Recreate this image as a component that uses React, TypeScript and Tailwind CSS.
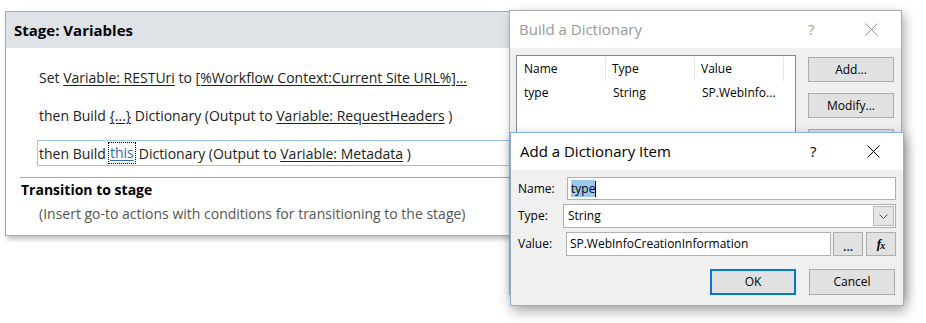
export default function App() {
  const font = { fontFamily: '"Open Sans", "Noto Sans", sans-serif' };

  function CloseIcon({ color }: { color: string }) {
    return (
      <svg width="13" height="13" viewBox="0 0 13 13">
        <path d="M0.5 0.5 L12.5 12.5 M12.5 0.5 L0.5 12.5" stroke={color} strokeWidth="1" fill="none" />
      </svg>
    );
  }

  function TitleBar({ title, active }: { title: string; active: boolean }) {
    return (
      <div className="h-[37px] bg-white flex items-center pl-[9px]">
        <div className={`text-[15px] flex-1 ${active ? "text-black" : "text-[#999]"}`}>{title}</div>
        <div className={`text-[15px] w-[14px] ${active ? "text-black" : "text-[#999]"}`}>?</div>
        <div className="ml-[43px] mr-[23px] flex items-center">
          <CloseIcon color={active ? "#000" : "#999"} />
        </div>
      </div>
    );
  }

  function Btn({ label, primary, cls }: { label: string; primary?: boolean; cls: string }) {
    return (
      <div
        className={`${cls} flex items-center justify-center bg-[#e1e1e1] text-[12px] text-black ${
          primary ? "border-2 border-[#0078d7]" : "border border-[#adadad]"
        }`}
      >
        {label}
      </div>
    );
  }

  return (
    <div className="relative w-[926px] h-[323px] bg-white overflow-hidden text-[#222]" style={font}>
      {/* workflow stage */}
      <div className="ml-[5px] mt-[11px] w-[540px] border border-[#ababab] bg-white shadow-[2px_3px_5px_rgba(0,0,0,0.25)]">
        <div className="h-[36px] bg-[#dfe3e8] flex items-center pl-[8px] font-bold text-[15px] text-black">
          Stage: Variables
        </div>
        <div className="pl-[31px] pt-[16px] flex flex-col gap-[12px] text-[14px]">
          <div className="h-[26px] flex items-center border border-transparent pl-[1px]">
            Set&nbsp;<span className="underline underline-offset-2">Variable: RESTUri</span>&nbsp;to&nbsp;
            <span className="underline underline-offset-2">[%Workflow Context:Current Site URL%]...</span>
          </div>
          <div className="h-[26px] flex items-center border border-transparent pl-[1px]">
            then Build&nbsp;<span className="underline underline-offset-2">{"{...}"}</span>&nbsp;Dictionary (Output to&nbsp;
            <span className="underline underline-offset-2">Variable: RequestHeaders</span>&nbsp;)
          </div>
          <div className="h-[26px] flex items-center border border-[#9dc3e6] pl-[1px]">
            then Build
            <span className="ml-[2px] px-[1px] border border-dotted border-black text-[#2f6db5] underline underline-offset-2 leading-[20px]">
              this
            </span>
            <span className="ml-[3px]">Dictionary (Output to&nbsp;</span>
            <span className="underline underline-offset-2">Variable: Metadata</span>&nbsp;)
          </div>
        </div>
        <div className="ml-[14px] mt-[11px] border-t border-[#a5a5a5]" />
        <div className="pl-[15px] pt-[1px] font-bold text-[14px] text-black leading-[22px]">Transition to stage</div>
        <div className="pl-[33px] pb-[8px] text-[14px] text-[#555] leading-[26px]">
          (Insert go-to actions with conditions for transitioning to the stage)
        </div>
      </div>

      {/* Build a Dictionary window */}
      <div className="absolute left-[509px] top-[10px] w-[393px] h-[285px] border border-[#aaa] bg-[#f0f0f0] shadow-[3px_4px_10px_rgba(0,0,0,0.3)]">
        <TitleBar title="Build a Dictionary" active={false} />
        <div className="flex pl-[6px] pt-[7px]">
          <div className="w-[280px] h-[220px] border border-[#828790] bg-white text-[12px] text-black">
            <div className="flex h-[26px] items-center">
              <div className="w-[89px] pl-[7px] border-r border-[#e5e5e5] h-[24px] flex items-center">Name</div>
              <div className="w-[89px] pl-[6px] border-r border-[#e5e5e5] h-[24px] flex items-center">Type</div>
              <div className="w-[89px] pl-[6px] border-r border-[#e5e5e5] h-[24px] flex items-center">Value</div>
            </div>
            <div className="flex h-[22px] items-center">
              <div className="w-[89px] pl-[7px]">type</div>
              <div className="w-[89px] pl-[7px]">String</div>
              <div className="w-[89px] pl-[7px]">SP.WebInfo...</div>
            </div>
          </div>
          <div className="ml-[12px] pt-[2px] flex flex-col gap-[11px]">
            <Btn label="Add..." cls="w-[86px] h-[25px]" />
            <Btn label="Modify..." cls="w-[86px] h-[25px]" />
            <Btn label="Remove" cls="w-[86px] h-[25px]" />
          </div>
        </div>
      </div>

      {/* Add a Dictionary Item window */}
      <div className="absolute left-[510px] top-[132px] w-[394px] h-[174px] border border-[#8ab4dc] bg-[#f0f0f0] shadow-[2px_5px_12px_rgba(0,0,0,0.35)] text-[12px] text-black">
        <TitleBar title="Add a Dictionary Item" active={true} />
        <div className="px-[7px] pt-[7px] flex flex-col">
          <div className="flex items-center h-[23px]">
            <div className="w-[49px]">Name:</div>
            <div className="w-[329px] h-[23px] border border-[#b0b0b0] bg-white flex items-center pl-[3px]">
              <span className="bg-[#99c9ef] leading-[17px]">type</span>
              <span className="w-[1px] h-[16px] bg-black" />
            </div>
          </div>
          <div className="flex items-center h-[24px] mt-[4px]">
            <div className="w-[45px]">Type:</div>
            <div className="w-[333px] h-[24px] border border-[#b0b0b0] bg-white flex items-center pl-[4px] pr-[1px]">
              <span className="flex-1">String</span>
              <div className="w-[21px] h-[20px] bg-[#e5e5e5] border border-[#b8b8b8] flex items-center justify-center">
                <svg width="9" height="5" viewBox="0 0 9 5">
                  <path d="M0.5 0.5 L4.5 4.5 L8.5 0.5" stroke="#555" strokeWidth="1" fill="none" />
                </svg>
              </div>
            </div>
          </div>
          <div className="flex items-center h-[24px] mt-[4px]">
            <div className="w-[48px]">Value:</div>
            <div className="w-[266px] h-[24px] border border-[#b0b0b0] bg-white flex items-center pl-[3px]">
              SP.WebInfoCreationInformation
            </div>
            <div className="ml-[2px] w-[30px] h-[24px] bg-[#e1e1e1] border border-[#adadad] flex items-end justify-center pb-[3px] text-[#1e3f8a] font-bold leading-[10px]">
              ...
            </div>
            <div
              className="ml-[3px] w-[30px] h-[24px] bg-[#e1e1e1] border border-[#adadad] flex items-center justify-center italic text-[13px] font-bold"
              style={{ fontFamily: '"Liberation Serif", serif' }}
            >
              f<span className="text-[10px] -ml-[1px] mt-[3px]">x</span>
            </div>
          </div>
          <div className="flex justify-end gap-[13px] mt-[13px] pr-[1px]">
            <Btn label="OK" primary cls="w-[86px] h-[26px]" />
            <Btn label="Cancel" cls="w-[86px] h-[26px]" />
          </div>
        </div>
      </div>
    </div>
  );
}
